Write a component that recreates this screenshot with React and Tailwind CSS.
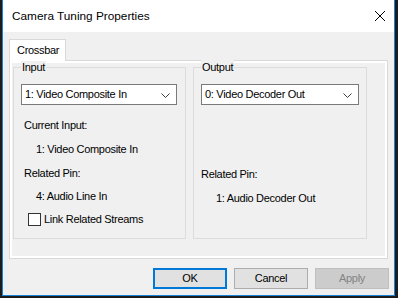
import React from "react";

const font = { fontFamily: '"Liberation Sans", Arial, sans-serif' };

const Combo = ({ text, width }) => (
  <div
    className={`h-[21px] ${width} bg-white border border-[#7a7a7a] flex items-center justify-between pl-[3px] pr-[6px]`}
  >
    <span className="text-[11px] tracking-[-0.3px] leading-[15px] text-black">{text}</span>
    <svg width="9" height="5" viewBox="0 0 9 5" className="mt-[1px]">
      <path d="M0.5 0.5 L4.5 4.5 L8.5 0.5" fill="none" stroke="#3c3c3c" strokeWidth="1" />
    </svg>
  </div>
);

const GroupBox = ({ label, width, children }) => (
  <div className={`relative ${width} h-[172px] border border-[#dcdcdc]`}>
    <span className="absolute -top-[8px] left-[7px] bg-[#f0f0f0] px-[1px] text-[11px] tracking-[-0.3px] leading-[15px] text-black">
      {label}
    </span>
    {children}
  </div>
);

const Button = ({ children, primary, disabled }) => (
  <button
    className={`w-[74px] h-[21px] text-[11px] tracking-[-0.3px] leading-[15px] flex items-center justify-center ${
      primary
        ? "bg-[#e1e1e1] border-2 border-[#0078d7] text-black"
        : disabled
        ? "bg-[#cccccc] border border-[#bfbfbf] text-[#838383]"
        : "bg-[#e1e1e1] border border-[#adadad] text-black"
    }`}
  >
    {children}
  </button>
);

export default function App() {
  return (
    <div className="w-[398px] h-[298px] bg-[#1c1c1c] pl-[2px] pr-[3px] pb-[2px] flex" style={font}>
      <div className="flex-1 flex flex-col bg-[#f0f0f0] border-x border-b border-[#1883d7]">
        {/* title bar */}
        <div className="h-[32px] bg-white flex items-center justify-between pl-[9px] pr-[9px]">
          <span className="text-[11.8px] leading-[15px] text-black mt-[1px]">Camera Tuning Properties</span>
          <svg width="10" height="10" viewBox="0 0 10 10">
            <path d="M0 0 L10 10 M10 0 L0 10" stroke="#000" strokeWidth="1" />
          </svg>
        </div>

        <div className="pl-[6px] pt-[7px]">
          {/* tab */}
          <div className="relative z-10 w-[57px] h-[22px] -mb-[1px] bg-white border border-b-0 border-[#d9d9d9] pl-[7px] flex items-center">
            <span className="text-[11px] tracking-[-0.3px] leading-[15px] text-black">Crossbar</span>
          </div>

          {/* tab page */}
          <div className="w-[379px] h-[199px] border border-[#d9d9d9] bg-white p-[2px]">
            <div className="w-full h-full bg-[#f0f0f0] pl-[1px] pt-[4px] flex gap-[7px]">
              <GroupBox label="Input" width="w-[173px]">
                <div className="pl-[7px] pt-[16px]">
                  <Combo text="1: Video Composite In" width="w-[156px]" />
                </div>
                <div className="pl-[10px] text-[11px] tracking-[-0.3px] leading-[15px] text-black">
                  <div className="mt-[13px]">Current Input:</div>
                  <div className="mt-[9px] pl-[12px]">1: Video Composite In</div>
                  <div className="mt-[9px]">Related Pin:</div>
                  <div className="mt-[8px] pl-[12px]">4: Audio Line In</div>
                  <div className="mt-[8px] pl-[4px] flex items-center gap-[3px]">
                    <span className="w-[13px] h-[13px] border border-[#333333] bg-white" />
                    <span>Link Related Streams</span>
                  </div>
                </div>
              </GroupBox>
              <GroupBox label="Output" width="w-[174px]">
                <div className="pl-[7px] pt-[16px]">
                  <Combo text="0: Video Decoder Out" width="w-[158px]" />
                </div>
                <div className="pl-[7px] text-[11px] tracking-[-0.3px] leading-[15px] text-black">
                  <div className="mt-[62px]">Related Pin:</div>
                  <div className="mt-[9px] pl-[15px]">1: Audio Decoder Out</div>
                </div>
              </GroupBox>
            </div>
          </div>
        </div>

        {/* buttons */}
        <div className="mt-[9px] pr-[5px] flex justify-end gap-[7px]">
          <Button primary>OK</Button>
          <Button>Cancel</Button>
          <Button disabled>Apply</Button>
        </div>
      </div>
    </div>
  );
}
